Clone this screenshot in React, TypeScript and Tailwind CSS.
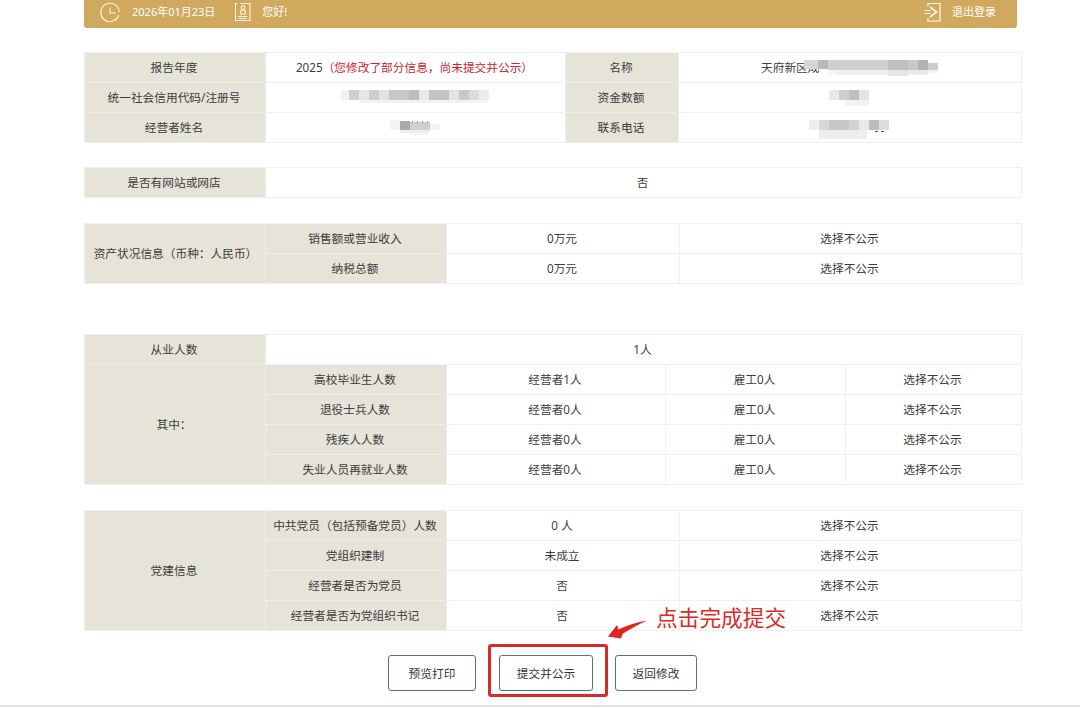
import React from 'react'
import clsx from 'clsx'

type CellProps = {
  children?: React.ReactNode
  head?: boolean
  className?: string
}

const Cell = ({ children, head, className }: CellProps) => (
  <div
    className={clsx(
      'flex items-center justify-center border-r border-b pb-[2px] pr-[2px] whitespace-nowrap',
      head ? 'bg-[#e6e3d9] border-[#f0eee8]' : 'border-[#efefef]',
      className
    )}
  >
    {children}
  </div>
)

// [x, y, width, height, fill]
type Block = [number, number, number, number, string]

const Mosaic = ({ width, height, blocks, className }: { width: number; height: number; blocks: Block[]; className?: string }) => (
  <svg width={width} height={height} className={className} shapeRendering="crispEdges">
    {blocks.map(([x, y, w, h, fill], index) => (
      <rect key={index} x={x} y={y} width={w} height={h} fill={fill} />
    ))}
  </svg>
)

const codeBlocks: Block[] = [
  [0, 0, 8, 10, '#f1f1f1'],
  [8, 0, 10, 10, '#cfcfcf'],
  [18, 0, 10, 10, '#e6e6e6'],
  [28, 0, 10, 10, '#cdcdcd'],
  [38, 0, 10, 10, '#e2e2e2'],
  [48, 0, 20, 10, '#c7c7c7'],
  [68, 0, 10, 10, '#bdbdbd'],
  [78, 0, 10, 10, '#e9e9e9'],
  [88, 0, 20, 10, '#c3c3c3'],
  [108, 0, 10, 10, '#e4e4e4'],
  [118, 0, 10, 10, '#c9c9c9'],
  [128, 0, 10, 10, '#dcdcdc'],
  [138, 0, 10, 10, '#ececec'],
  [18, 10, 128, 3, '#f3f3f3'],
]

const ownerBlocks: Block[] = [
  [0, 0, 10, 10, '#f4f4f4'],
  [10, 1, 10, 9, '#aaaaaa'],
  [20, 2, 20, 8, '#cfcfcf'],
  [22, 1, 1, 2, '#999999'],
  [27, 1, 1, 2, '#999999'],
  [32, 1, 1, 2, '#999999'],
  [37, 1, 1, 2, '#999999'],
  [40, 4, 10, 6, '#f2f2f2'],
  [10, 10, 30, 3, '#eeeeee'],
  [20, 13, 18, 2, '#f5f5f5'],
]

const nameBlocks: Block[] = [
  [0, 0, 14, 9, '#d6d6d6'],
  [14, 0, 10, 9, '#b8b8b8'],
  [24, 0, 60, 10, '#cfcfcf'],
  [84, 0, 20, 10, '#bfbfbf'],
  [104, 0, 10, 10, '#c9c9c9'],
  [114, 0, 10, 10, '#b2b2b2'],
  [124, 3, 10, 7, '#cccccc'],
  [24, 10, 10, 5, '#f6f6f6'],
  [34, 10, 50, 5, '#eeeeee'],
  [84, 10, 20, 6, '#e5e5e5'],
  [104, 10, 20, 5, '#eaeaea'],
  [124, 10, 10, 3, '#f3f3f3'],
]

const moneyBlocks: Block[] = [
  [0, 0, 10, 10, '#e9e9e9'],
  [10, 0, 10, 10, '#cfcfcf'],
  [20, 0, 10, 10, '#bfbfbf'],
  [30, 0, 10, 10, '#e4e4e4'],
  [16, 10, 24, 6, '#f3f3f3'],
]

const phoneBlocks: Block[] = [
  [0, 0, 10, 10, '#eeeeee'],
  [10, 0, 10, 10, '#d8d8d8'],
  [20, 0, 20, 10, '#c7c7c7'],
  [40, 0, 10, 10, '#d3d3d3'],
  [50, 0, 10, 10, '#e8e8e8'],
  [60, 0, 10, 10, '#bcbcbc'],
  [70, 0, 10, 10, '#dddddd'],
  [10, 10, 48, 9, '#eeeeee'],
  [66, 11, 3, 1, '#555555'],
  [72, 11, 3, 1, '#555555'],
]

const staffRows = [
  { label: '高校毕业生人数', owner: '经营者1人', hired: '雇工0人' },
  { label: '退役士兵人数', owner: '经营者0人', hired: '雇工0人' },
  { label: '残疾人人数', owner: '经营者0人', hired: '雇工0人' },
  { label: '失业人员再就业人数', owner: '经营者0人', hired: '雇工0人' },
]

const partyRows = [
  { label: '中共党员（包括预备党员）人数', value: '0 人' },
  { label: '党组织建制', value: '未成立' },
  { label: '经营者是否为党员', value: '否' },
  { label: '经营者是否为党组织书记', value: '否' },
]

const gridBase = 'grid w-[938px] auto-rows-[30px] border-t border-l border-[#efefef]'
const btn = 'h-9 rounded-[3px] border border-[#4f7580] bg-white text-[#333]'

const Header = () => (
  <header className="flex h-7 w-[933px] items-center rounded-b-[3px] bg-[#d0a95f] pl-4 pr-[21px] pb-[5px] text-[11px] text-white">
    <svg width="20" height="20" viewBox="0 0 20 20" fill="none" stroke="#fbf3e0" strokeWidth="1.1">
      <path d="M18.8 13.2A9.2 9.2 0 1 1 19.2 10M18.8 13.2A9.2 9.2 0 0 1 14 18.3" />
      <path d="M10 5.5V11h5.5" />
    </svg>
    <span className="ml-3">2026年01月23日</span>
    <svg className="ml-[19px]" width="17" height="20" viewBox="0 0 17 20" fill="none" stroke="#fbf3e0" strokeWidth="1.1">
      <path d="M3.5 1.5H1.5V18.5H16V1.5H6" />
      <circle cx="9" cy="5.8" r="1.9" />
      <path d="M6.5 12V9.8Q6.5 8 9 8T11.5 9.8V12Z" />
      <path d="M4 14.5H13.5M5 16.5H12.5" />
    </svg>
    <span className="ml-[11px]">您好!</span>
    <svg className="ml-auto" width="18" height="20" viewBox="0 0 18 20" fill="none" stroke="#fff8e8" strokeWidth="1.2">
      <path d="M4 4.5V1.5H16V19H4V16" />
      <path d="M0.500 8.500H6.500M0.500 11.500H6.500" />
      <path d="M6 5L12.500 10L6 15" strokeWidth="1.6" />
    </svg>
    <span className="ml-[10px]">退出登录</span>
  </header>
)

const App = () => {
  return (
    <div className="h-[709px] w-[1080px] overflow-hidden bg-white pl-[84px] font-['Noto_Sans','Noto_Sans_CJK_SC',sans-serif] text-[11.7px] leading-4 text-[#3c3c3c]">
      <Header />

      <section className={`${gridBase} mt-6 grid-cols-[181px_300px_113px_343px]`}>
        <Cell head>报告年度</Cell>
        <Cell>
          2025<span className="text-[#c9252d]">（您修改了部分信息，尚未提交并公示）</span>
        </Cell>
        <Cell head>名称</Cell>
        <Cell>
          <div className="relative w-[176px]">
            天府新区成
            <Mosaic width={135} height={17} blocks={nameBlocks} className="absolute left-[43px] top-px" />
          </div>
        </Cell>
        <Cell head>统一社会信用代码/注册号</Cell>
        <Cell>
          <Mosaic width={148} height={14} blocks={codeBlocks} className="ml-px" />
        </Cell>
        <Cell head>资金数额</Cell>
        <Cell>
          <Mosaic width={40} height={16} blocks={moneyBlocks} className="mt-[3px]" />
        </Cell>
        <Cell head>经营者姓名</Cell>
        <Cell>
          <Mosaic width={50} height={15} blocks={ownerBlocks} className="mt-[2px]" />
        </Cell>
        <Cell head>联系电话</Cell>
        <Cell>
          <Mosaic width={80} height={19} blocks={phoneBlocks} className="mt-[5px]" />
        </Cell>
      </section>

      <section className={`${gridBase} mt-6 grid-cols-[181px_756px]`}>
        <Cell head>是否有网站或网店</Cell>
        <Cell>否</Cell>
      </section>

      <section className={`${gridBase} mt-[25px] grid-cols-[181px_181px_233px_342px]`}>
        <Cell head className="row-span-2 pl-[3px]">资产状况信息（币种：人民币）</Cell>
        <Cell head>销售额或营业收入</Cell>
        <Cell>0万元</Cell>
        <Cell>选择不公示</Cell>
        <Cell head>纳税总额</Cell>
        <Cell>0万元</Cell>
        <Cell>选择不公示</Cell>
      </section>

      <section className={`${gridBase} mt-[50px] grid-cols-[181px_181px_219px_180px_176px]`}>
        <Cell head>从业人数</Cell>
        <Cell className="col-span-4">1人</Cell>
        <Cell head className="row-span-4">其中：</Cell>
        {staffRows.map((row) => (
          <React.Fragment key={row.label}>
            <Cell head>{row.label}</Cell>
            <Cell>{row.owner}</Cell>
            <Cell>{row.hired}</Cell>
            <Cell>选择不公示</Cell>
          </React.Fragment>
        ))}
      </section>

      <section className={`${gridBase} mt-[25px] grid-cols-[181px_181px_233px_342px]`}>
        <Cell head className="row-span-4">党建信息</Cell>
        {partyRows.map((row) => (
          <React.Fragment key={row.label}>
            <Cell head>{row.label}</Cell>
            <Cell>{row.value}</Cell>
            <Cell>选择不公示</Cell>
          </React.Fragment>
        ))}
      </section>

      <div className="-ml-[84px] flex h-[76px] items-start border-b-2 border-[#e4e4e4] pl-[388px] pt-6">
        <button className={`${btn} w-[88px]`}>预览打印</button>
        <div className="relative ml-[23px]">
          <button className={`${btn} w-[94px]`}>提交并公示</button>
          {/* callout around the submit button */}
          <div className="pointer-events-none absolute -left-[11px] -top-[11px] h-[53px] w-[120px] rounded-[3px] border-[3px] border-[#d92b26]" />
          <svg className="absolute left-[109px] -top-[36px]" width="40" height="22" viewBox="0 0 40 22">
            <path d="M0 17.5L9 6L10.5 10.500Q24 4 39 1.500Q25 8 14.500 15L13 19.500Z" fill="#e0241f" />
          </svg>
          <span className="absolute left-[157px] -top-[51px] whitespace-nowrap text-[21.7px] leading-7 text-[#dc2b26]">点击完成提交</span>
        </div>
        <button className={`${btn} ml-[22px] w-[82px]`}>返回修改</button>
      </div>
    </div>
  )
}

export default App
